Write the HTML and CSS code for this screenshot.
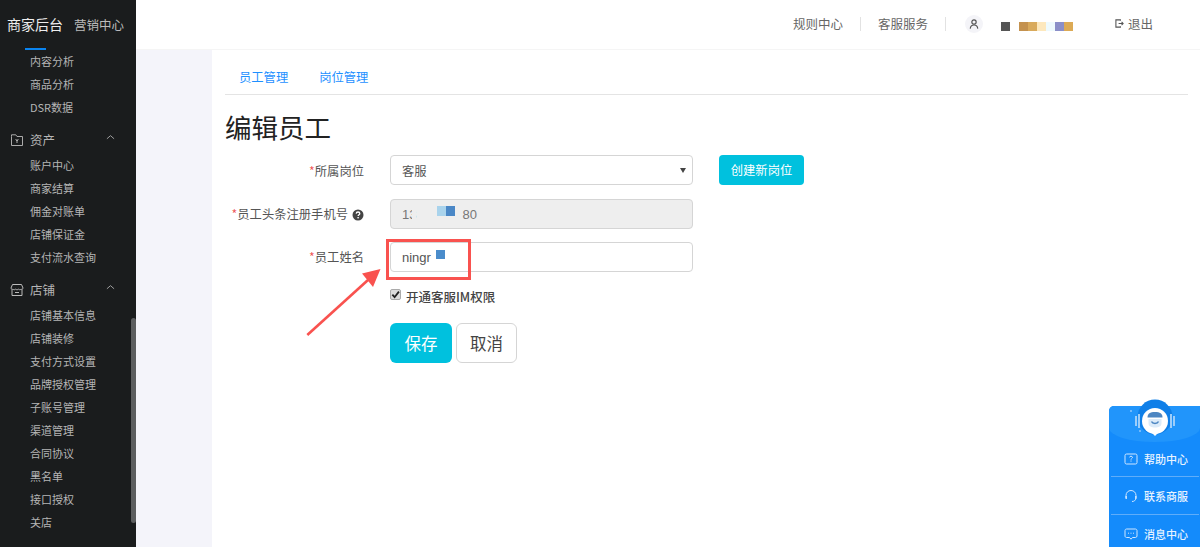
FILE: index.html
```html
<!DOCTYPE html>
<html lang="zh-CN">
<head>
<meta charset="utf-8">
<title>编辑员工</title>
<link rel="stylesheet" href="styles.css">
</head>
<body>
<div class="app">
  <aside class="sidebar">
    <div class="brand"><span class="brand-main">商家后台</span><span class="brand-sub">营销中心</span></div>
    <div class="brand-line"></div>
    <nav class="menu">
      <a class="item">内容分析</a>
      <a class="item">商品分析</a>
      <a class="item">DSR数据</a>
      <div class="group">
        <svg class="group-icon" viewBox="0 0 14 14"><path d="M1.500 3.500V12.500H12.500V3.500H7L5.800 1.800H1.500V3.500" fill="none" stroke="#aaa" stroke-width="1"/><path d="M7 6V10M5.500 6.500L7 8L8.500 6.500" fill="none" stroke="#aaa" stroke-width="1"/></svg>
        <span>资产</span>
        <svg class="chev" viewBox="0 0 10 6"><path d="M1 5L5 1.500L9 5" fill="none" stroke="#aaa" stroke-width="1"/></svg>
      </div>
      <a class="item">账户中心</a>
      <a class="item">商家结算</a>
      <a class="item">佣金对账单</a>
      <a class="item">店铺保证金</a>
      <a class="item">支付流水查询</a>
      <div class="group">
        <svg class="group-icon" viewBox="0 0 14 14"><path d="M2.500 1.500H11.500L13 5C13 6.200 11.800 6.600 11 6.200C10.200 6.900 9 6.900 8.500 6.200C7.800 6.900 6.400 6.900 5.600 6.200C5 6.900 3.800 6.900 3 6.200C2.200 6.600 1 6.200 1 5ZM2 6.500V12.500H12V6.500M5 9.500H9" fill="none" stroke="#bbb" stroke-width="1"/></svg>
        <span>店铺</span>
        <svg class="chev" viewBox="0 0 10 6"><path d="M1 5L5 1.500L9 5" fill="none" stroke="#aaa" stroke-width="1"/></svg>
      </div>
      <a class="item">店铺基本信息</a>
      <a class="item">店铺装修</a>
      <a class="item">支付方式设置</a>
      <a class="item">品牌授权管理</a>
      <a class="item">子账号管理</a>
      <a class="item">渠道管理</a>
      <a class="item">合同协议</a>
      <a class="item">黑名单</a>
      <a class="item">接口授权</a>
      <a class="item">关店</a>
    </nav>
    <div class="scroll-thumb"></div>
  </aside>

  <div class="right">
    <header class="topbar">
      <a class="top-link">规则中心</a>
      <i class="top-sep"></i>
      <a class="top-link">客服服务</a>
      <i class="top-sep"></i>
      <span class="avatar"><svg viewBox="0 0 12 12"><circle cx="6" cy="3.600" r="2.600" fill="none" stroke="#555" stroke-width="1.400"/><path d="M1.500 11.500C1.800 8.600 3.600 7.200 6 7.200S10.200 8.600 10.500 11.500" fill="none" stroke="#555" stroke-width="1.400"/></svg></span>
      <span class="mosaic">
        <i class="m1"></i><i class="gap"></i><i class="m2"></i><i class="m3"></i><i class="m4"></i><i class="m5"></i><i class="m6"></i><i class="m7"></i>
      </span>
      <span class="logout">
        <svg viewBox="0 0 10 10"><path d="M6 2V1H1V9H6V8" fill="none" stroke="#555" stroke-width="1.200"/><path d="M4 5H9M7.300 3.200L9 5L7.300 6.800" fill="none" stroke="#555" stroke-width="1.200"/></svg>
        退出
      </span>
    </header>

    <div class="body">
      <div class="gutter"></div>
      <main class="main">
        <div class="tabs">
          <a class="tab">员工管理</a>
          <a class="tab">岗位管理</a>
        </div>
        <h1 class="title">编辑员工</h1>
        <form class="form">
          <div class="row row-a">
            <label class="label"><b>*</b>所属岗位</label>
            <div class="control select"><span>客服</span><i class="caret"></i></div>
            <a class="btn-new">创建新岗位</a>
          </div>
          <div class="row row-b">
            <label class="label"><b>*</b>员工头条注册手机号<svg class="help" viewBox="0 0 12 12"><circle cx="6" cy="6" r="5.500" fill="#444"/><path d="M4.200 4.600C4.300 3.500 5 3 6 3C7.100 3 7.800 3.600 7.800 4.500C7.800 5.700 6.100 5.700 6.100 7" fill="none" stroke="#fff" stroke-width="1.300"/><rect x="5.400" y="8" width="1.400" height="1.400" fill="#fff"/></svg></label>
            <div class="control disabled"><span class="num">13</span><i class="mask"></i><span class="blur-wrap"><i class="b1"></i><i class="b2"></i></span><span class="num">80</span></div>
          </div>
          <div class="row row-c">
            <label class="label"><b>*</b>员工姓名</label>
            <div class="control"><span class="name">ningr</span><i class="b3"></i></div>
          </div>
          <div class="check-row">
            <span class="check"><svg viewBox="0 0 10 10"><path d="M1.500 5.200L4 8L8.800 1.800" fill="none" stroke="#222" stroke-width="2"/></svg></span>
            <span class="check-text">开通客服IM权限</span>
          </div>
          <div class="actions">
            <a class="btn-save">保存</a>
            <a class="btn-cancel">取消</a>
          </div>
        </form>
      </main>
    </div>
  </div>

  <div class="highlight"></div>
  <svg class="arrow" viewBox="0 0 90 90"><path d="M2.300 80L63 25" stroke="#f9524f" stroke-width="2.600" fill="none"/><path d="M75.500 14L57 18.500L68 32Z" fill="#f9524f"/></svg>

  <aside class="assist">
    <div class="assist-head">
      <svg class="bot" viewBox="0 0 46 46">
        <circle cx="23" cy="20" r="17.500" fill="#0f7fe8"/>
        <circle cx="-1" cy="14" r="1" fill="#8cc6fb"/>
        <circle cx="8" cy="34" r="1" fill="#8cc6fb"/>
        <path d="M4 19V29M7 17V31M39 17V31M42 19V29" fill="none" stroke="#9ccdfa" stroke-width="2"/>
        <circle cx="23" cy="24" r="13" fill="#fff"/>
        <path d="M20 36L23 39L26 36Z" fill="#fff"/>
        <path d="M15.500 20.500C15.500 16.500 18 15 23 15S30.500 16.500 30.500 20.500Z" fill="#4d86c2"/>
        <path d="M16.500 22H29.500V26C29.500 29.500 26.500 30.500 23 30.500S16.500 29.500 16.500 26Z" fill="#dcebf9"/>
        <path d="M19.500 24.500C20.500 27 25.500 27 26.500 24.500" fill="none" stroke="#4d86c2" stroke-width="1.500"/>
      </svg>
    </div>
    <div class="assist-row row-help">
      <svg viewBox="0 0 14 14"><rect x="1" y="2" width="12" height="10" rx="1.500" fill="none" stroke="#cfe6ff"/><path d="M5.500 5.400C5.600 4.600 6.200 4.200 7 4.200C7.800 4.200 8.500 4.700 8.500 5.400C8.500 6.400 7 6.400 7 7.600M7 8.500V9.600" fill="none" stroke="#cfe6ff"/></svg>
      <span>帮助中心</span>
    </div>
    <div class="assist-row">
      <svg viewBox="0 0 14 14"><path d="M2 9V6.500C2 3.600 4.200 1.500 7 1.500S12 3.600 12 6.500V9" fill="none" stroke="#cfe6ff"/><path d="M11.800 9.500C11.500 11.500 10 12.500 8 12.500" fill="none" stroke="#cfe6ff"/><rect x="1.500" y="7" width="1.400" height="3" fill="#cfe6ff"/><rect x="11.100" y="7" width="1.400" height="3" fill="#cfe6ff"/></svg>
      <span>联系商服</span>
    </div>
    <div class="assist-row last">
      <svg viewBox="0 0 14 14"><path d="M2.500 2H11.500C12.300 2 13 2.700 13 3.500V9C13 9.800 12.300 10.500 11.500 10.500H8.500L7 12.200L5.500 10.500H2.500C1.700 10.500 1 9.800 1 9V3.500C1 2.700 1.700 2 2.500 2Z" fill="none" stroke="#cfe6ff"/><path d="M4 6.200H5M6.500 6.200H7.500M9 6.200H10" stroke="#cfe6ff"/></svg>
      <span>消息中心</span>
    </div>
  </aside>
</div>
</body>
</html>
```

FILE: styles.css
```css
* { box-sizing: border-box; }
html, body { margin: 0; height: 100%; overflow: hidden; background: #fff; }
body { font-family: "Noto Sans CJK SC", "Liberation Sans", sans-serif; font-size: 12px; color: #555; }
i { display: block; font-style: normal; }
a { display: block; }

.app { position: relative; display: flex; width: 1200px; height: 547px; overflow: hidden; }

/* sidebar */
.sidebar { position: relative; width: 136px; height: 547px; flex: none; background: #1a1c1d; overflow: hidden; color: #b5b5b5; }
.brand { display: flex; align-items: baseline; height: 48px; padding: 14px 0 0 7px; white-space: nowrap; }
.brand-main { font-size: 14px; line-height: 20px; color: #eee; }
.brand-sub { margin-left: 11px; font-size: 12.500px; line-height: 20px; color: #bbb; }
.brand-line { width: 21px; height: 2px; margin-left: 25px; background: #0a84f0; }
.menu { display: flex; flex-direction: column; }
.item { height: 23px; padding-left: 30px; font-size: 11px; line-height: 23px; color: #b5b5b5; white-space: nowrap; }
.group { position: relative; display: flex; align-items: center; height: 23px; margin: 9px 0 3px; padding-left: 10px; font-size: 12.500px; color: #b5b5b5; }
.group-icon { width: 14px; height: 14px; margin-right: 6px; }
.chev { width: 9px; height: 6px; margin-left: 51px; margin-top: -5px; }
.scroll-thumb { position: absolute; left: 131px; top: 318px; width: 5px; height: 205px; border-radius: 3px; background: #5c5e5f; }

/* top */
.right { flex: 1; display: flex; flex-direction: column; min-width: 0; }
.topbar { display: flex; align-items: center; height: 50px; flex: none; padding: 0 0 2px 657px; background: #fff; border-bottom: 1px solid #f5f5f5; }
.top-link { font-size: 12.500px; color: #666; white-space: nowrap; }
.top-sep { width: 1px; height: 14px; margin: 0 17px; background: #e2e2e2; }
.avatar { display: flex; align-items: center; justify-content: center; width: 18px; height: 18px; margin-left: 2px; border-radius: 50%; background: #f4f4f8; }
.avatar svg { width: 10px; height: 10px; }
.mosaic { display: flex; margin: 5px 0 0 18px; height: 9px; }
.mosaic i { width: 9px; height: 9px; }
.mosaic .gap { width: 9px; background: transparent; }
.mosaic .m1 { background: #555; }
.mosaic .m2 { background: #c4924f; }
.mosaic .m3 { background: #d9aa5c; }
.mosaic .m4 { background: #fde8bd; }
.mosaic .m5 { background: #eefafe; }
.mosaic .m6 { background: #8b8fc8; }
.mosaic .m7 { background: #dcaa55; }
.logout { display: flex; align-items: center; margin-left: 42px; font-size: 12.500px; color: #666; white-space: nowrap; }
.logout svg { width: 9px; height: 9px; margin-right: 4px; }

/* body */
.body { flex: 1; display: flex; min-height: 0; }
.gutter { width: 76px; flex: none; background: #f4f4fa; }
.main { flex: 1; padding: 0 12px 0 13px; background: #fff; }
.tabs { display: flex; height: 45px; padding: 19px 0 0 14px; gap: 31px; border-bottom: 1px solid #e4e4e4; }
.tab { font-size: 12.300px; line-height: 17px; color: #1e90ff; white-space: nowrap; }
.title { margin: 14px 0 10px; font-size: 26.500px; line-height: 36px; font-weight: 400; color: #222; }
.form { display: flex; flex-direction: column; }
.row { display: flex; align-items: center; height: 30px; }
.row-b { margin-top: 14px; }
.row-c { margin-top: 13px; }
.label { width: 139px; margin-right: 26px; flex: none; text-align: right; font-size: 12.300px; color: #555; white-space: nowrap; }
.row-a .label { padding-top: 2px; }
.label b { font-weight: 400; color: #e55; }
.help { display: inline-block; width: 12px; height: 12px; margin-left: 4px; vertical-align: -1.500px; }
.control { display: flex; align-items: center; width: 303px; height: 30px; padding: 0 11px; border: 1px solid #d5d5d5; border-radius: 4px; background: #fff; font-size: 12.300px; color: #555; }
.select { position: relative; padding-top: 2px; }
.caret { position: absolute; right: 6px; top: 12px; border-left: 3px solid transparent; border-right: 3px solid transparent; border-top: 5px solid #444; }
.disabled { background: #eee; }
.num { font-family: "Liberation Sans", sans-serif; font-size: 13px; color: #777; }
.mask { width: 4px; height: 14px; margin-left: -4px; background: #eee; }
.blur-wrap { display: flex; width: 18px; margin: -7px 7px 0 21px; }
.blur-wrap i { width: 9px; height: 10px; }
.blur-wrap .b1 { background: #a9d3ec; }
.blur-wrap .b2 { background: #4a87c6; }
.name { font-family: "Liberation Sans", sans-serif; font-size: 13px; color: #555; }
.b3 { width: 9px; height: 9px; margin: -6px 0 0 5px; background: #4a8ccb; }
.btn-new { width: 85px; height: 30px; margin-left: 26px; border-radius: 4px; background: #00c1de; color: #fff; font-size: 12.300px; line-height: 31px; text-align: center; white-space: nowrap; }
.check-row { display: flex; align-items: center; height: 20px; margin: 14px 0 0 165px; }
.check { display: flex; align-items: center; justify-content: center; width: 11px; height: 11px; margin-top: -3px; border: 1px solid #aaa; border-radius: 2px; background: #ddd; }
.check svg { width: 9px; height: 9px; }
.check-text { margin-left: 5px; font-size: 12.500px; font-weight: 500; color: #444; white-space: nowrap; }
.actions { display: flex; gap: 4px; margin: 17px 0 0 165px; }
.btn-save, .btn-cancel { height: 40px; border-radius: 6px; font-size: 16.500px; line-height: 40px; text-align: center; }
.btn-save { width: 62px; background: #00c1de; color: #fff; }
.btn-cancel { width: 61px; border: 1px solid #d5d5d5; background: #fff; color: #444; line-height: 38px; }

/* annotation overlays */
.highlight { position: absolute; left: 386px; top: 239px; width: 85px; height: 41px; border: 3px solid #f9524f; }
.arrow { position: absolute; left: 305px; top: 255px; width: 90px; height: 90px; }

/* floating assistant */
.assist { position: absolute; left: 1109px; top: 406px; width: 91px; height: 141px; border-radius: 5px 0 0 0; background: #148bfb; color: #e8f3ff; }
.assist-head { position: relative; height: 36px; margin-bottom: -3px; border-radius: 5px 0 50% 50% / 5px 0 14px 14px; background: #2195fb; }
.bot { position: absolute; left: 23px; top: -9px; width: 46px; height: 46px; overflow: visible; }
.assist-row { display: flex; align-items: center; height: 38px; margin: 0 1px 0 2px; padding-left: 13px; border-bottom: 1px solid #5fadfa; font-size: 11px; font-weight: 500; white-space: nowrap; }
.row-help { padding-top: 2px; }
.assist-row svg { width: 14px; height: 14px; margin-right: 6px; }
.assist-row.last { border-bottom: 0; }
```
